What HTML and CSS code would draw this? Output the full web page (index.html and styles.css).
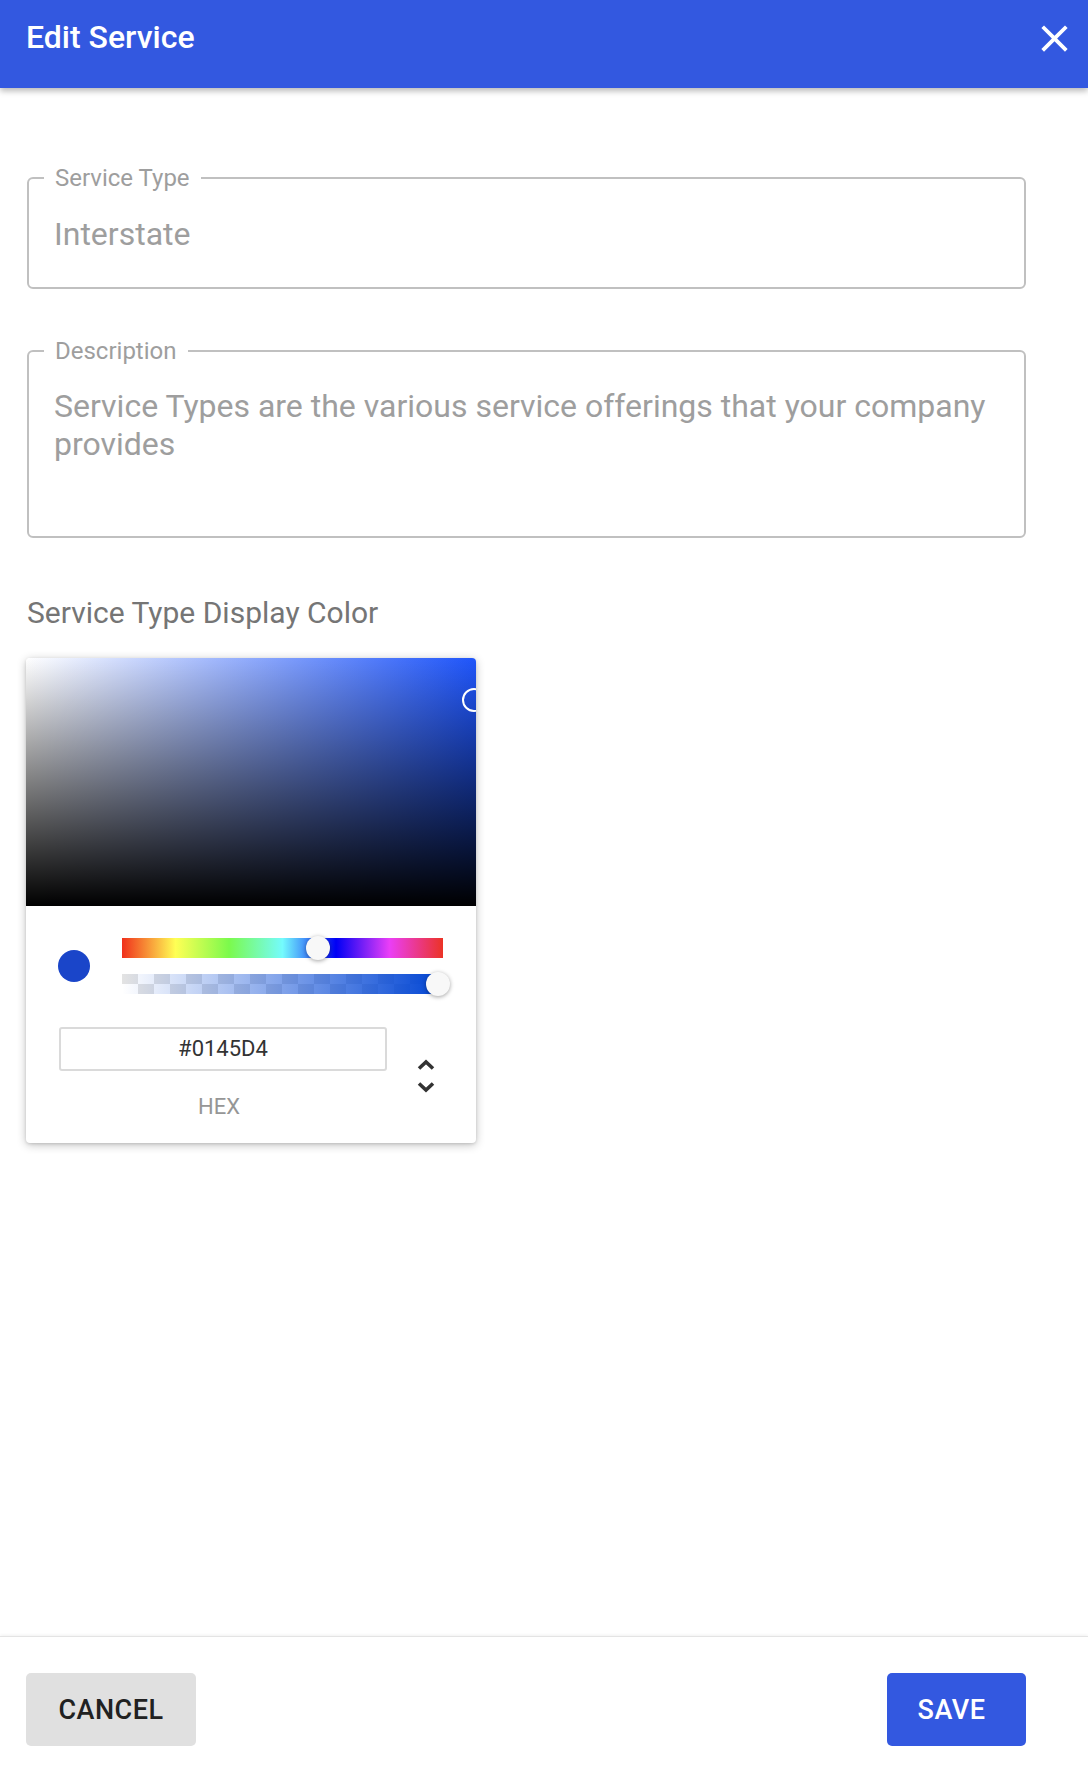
FILE: index.html
```html
<!DOCTYPE html>
<html lang="en">
<head>
<meta charset="utf-8">
<title>Edit Service</title>
<link rel="stylesheet" href="styles.css">
</head>
<body>
<div class="dialog">
  <header class="header">
    <h1 class="title">Edit Service</h1>
    <svg class="close" width="45" height="45" viewBox="0 0 24 24" aria-label="Close">
      <path fill="#fff" d="M19 6.41L17.59 5 12 10.59 6.41 5 5 6.41 10.59 12 5 17.59 6.41 19 12 13.41 17.59 19 19 17.59 13.41 12z"/>
    </svg>
  </header>

  <main class="content">
    <fieldset class="field field-type">
      <legend class="field-label">Service Type</legend>
      <div class="field-value">Interstate</div>
    </fieldset>

    <fieldset class="field field-desc">
      <legend class="field-label">Description</legend>
      <div class="field-value field-multi">Service Types are the various service offerings that your company provides</div>
    </fieldset>

    <h2 class="section-title">Service Type Display Color</h2>

    <div class="picker">
      <div class="saturation">
        <span class="sat-handle"></span>
      </div>
      <div class="picker-body">
        <div class="picker-row">
          <span class="swatch"></span>
          <div class="sliders">
            <div class="hue-bar">
              <span class="knob hue-knob"></span>
            </div>
            <div class="alpha-bar">
              <span class="knob alpha-knob"></span>
            </div>
          </div>
        </div>
        <div class="picker-fields">
          <div class="hex-col">
            <div class="hex-input">#0145D4</div>
            <div class="hex-label">HEX</div>
          </div>
          <svg class="toggle" width="18" height="34" viewBox="0 0 18 34">
            <path d="M2 9.5 L9 3 L16 9.5" fill="none" stroke="#333" stroke-width="3.6"/>
            <path d="M2 24.5 L9 31 L16 24.5" fill="none" stroke="#333" stroke-width="3.6"/>
          </svg>
        </div>
      </div>
    </div>
  </main>

  <footer class="footer">
    <button class="btn btn-cancel">CANCEL</button>
    <button class="btn btn-save">SAVE</button>
  </footer>
</div>
</body>
</html>
```

FILE: styles.css
```css
* { box-sizing: border-box; }

html, body {
  margin: 0;
  padding: 0;
  background: #fff;
}

body {
  font-family: Roboto, "Liberation Sans", Arial, sans-serif;
  color: #212121;
}

.dialog {
  width: 1088px;
  height: 1766px;
  display: flex;
  flex-direction: column;
  overflow: hidden;
}

.header {
  flex: 0 0 88px;
  height: 88px;
  background: #3358e0;
  display: flex;
  align-items: flex-start;
  justify-content: space-between;
  padding: 0 11px 0 26px;
  box-shadow: 0 3px 6px rgba(0, 0, 0, 0.28);
  position: relative;
  z-index: 2;
}

.title {
  margin: 18px 0 0;
  font-size: 32px;
  line-height: 38px;
  font-weight: 500;
  color: #fff;
}

.close {
  margin-top: 16px;
  display: block;
}

.content {
  flex: 1 1 auto;
  padding: 78px 62px 0 27px;
}

.field {
  margin: 0;
  padding: 0 23px 0 25px;
  border: 2px solid #c0c0c0;
  border-radius: 6px;
  min-width: 0;
}

.field-label {
  margin-left: -10px;
  padding: 0 11px;
  font-size: 24px;
  line-height: 24px;
  color: #9e9e9e;
}

.field-type {
  padding-top: 26px;
  padding-bottom: 35px;
}

.field-desc {
  margin-top: 50px;
  padding-top: 24px;
  padding-bottom: 73px;
}

.field-value {
  font-size: 32px;
  line-height: 36px;
  color: #9e9e9e;
}

.field-multi {
  line-height: 38px;
}

.section-title {
  margin: 57px 0 0;
  font-size: 30px;
  line-height: 35px;
  font-weight: 400;
  color: #757575;
}

.picker {
  margin: 28px 0 0 -1px;
  width: 450px;
  background: #fff;
  border-radius: 4px;
  overflow: hidden;
  box-shadow: 0 2px 10px rgba(0, 0, 0, 0.24), 0 1px 3px rgba(0, 0, 0, 0.12);
}

.saturation {
  position: relative;
  height: 248px;
  background:
    linear-gradient(to top, #000, rgba(0, 0, 0, 0)),
    linear-gradient(to right, #fff, #1f55fa);
}

.sat-handle {
  position: absolute;
  left: calc(100% - 14px);
  top: 30px;
  width: 24px;
  height: 24px;
  border: 2px solid #fff;
  border-radius: 50%;
}

.picker-body {
  padding: 32px 33px 23px 32px;
}

.picker-row {
  display: flex;
  align-items: center;
  gap: 32px;
}

.swatch {
  flex: 0 0 32px;
  width: 32px;
  height: 32px;
  border-radius: 50%;
  background: #1a45c9;
}

.sliders {
  flex: 1 1 auto;
  display: flex;
  flex-direction: column;
  gap: 16px;
}

.hue-bar,
.alpha-bar {
  position: relative;
  height: 20px;
}

.hue-bar {
  background: linear-gradient(to right,
    #f0301c 0%, #ffff55 16.66%, #7bfa4c 33.33%, #74fbfd 50%,
    #0000f5 66.66%, #ea3ef7 83.33%, #eb3325 100%);
}

.alpha-bar {
  background:
    linear-gradient(to right, rgba(1, 69, 212, 0), rgba(1, 69, 212, 1)),
    conic-gradient(#fff 0 25%, #e3e3e3 0 50%, #fff 0 75%, #e3e3e3 0);
  background-size: 100% 100%, 32px 20px;
}

.knob {
  position: absolute;
  top: -2px;
  width: 24px;
  height: 24px;
  border-radius: 50%;
  background: #f8f8f8;
  box-shadow: 0 1px 4px rgba(0, 0, 0, 0.37);
}

.hue-knob { left: calc(61.2% - 12px); }
.alpha-knob { left: calc(100% - 17px); }

.picker-fields {
  display: flex;
  align-items: flex-start;
  margin-top: 33px;
}

.hex-col {
  width: 328px;
  margin-left: 1px;
  display: flex;
  flex-direction: column;
  align-items: center;
}

.hex-input {
  width: 100%;
  height: 44px;
  border: 2px solid #dadada;
  border-radius: 3px;
  font-size: 22px;
  line-height: 40px;
  text-align: center;
  color: #333;
}

.hex-label {
  margin: 23px 8px 0 0;
  font-size: 22px;
  line-height: 26px;
  color: #969696;
}

.toggle {
  display: block;
  margin: 32px 0 0 30px;
}

.footer {
  flex: 0 0 130px;
  display: flex;
  justify-content: space-between;
  align-items: flex-start;
  padding: 36px 62px 0 26px;
  border-top: 1px solid #e4e4e4;
  box-shadow: 0 -1px 3px rgba(0, 0, 0, 0.06);
}

.btn {
  height: 73px;
  border: none;
  border-radius: 5px;
  font-family: Roboto, "Liberation Sans", Arial, sans-serif;
  font-size: 27px;
  font-weight: 500;
  letter-spacing: 0.5px;
  padding: 0;
}

.btn-cancel {
  width: 170px;
  background: #e0e0e0;
  color: #212121;
}

.btn-save {
  width: 139px;
  padding-right: 10px;
  background: #3358e0;
  color: #fff;
}
```
